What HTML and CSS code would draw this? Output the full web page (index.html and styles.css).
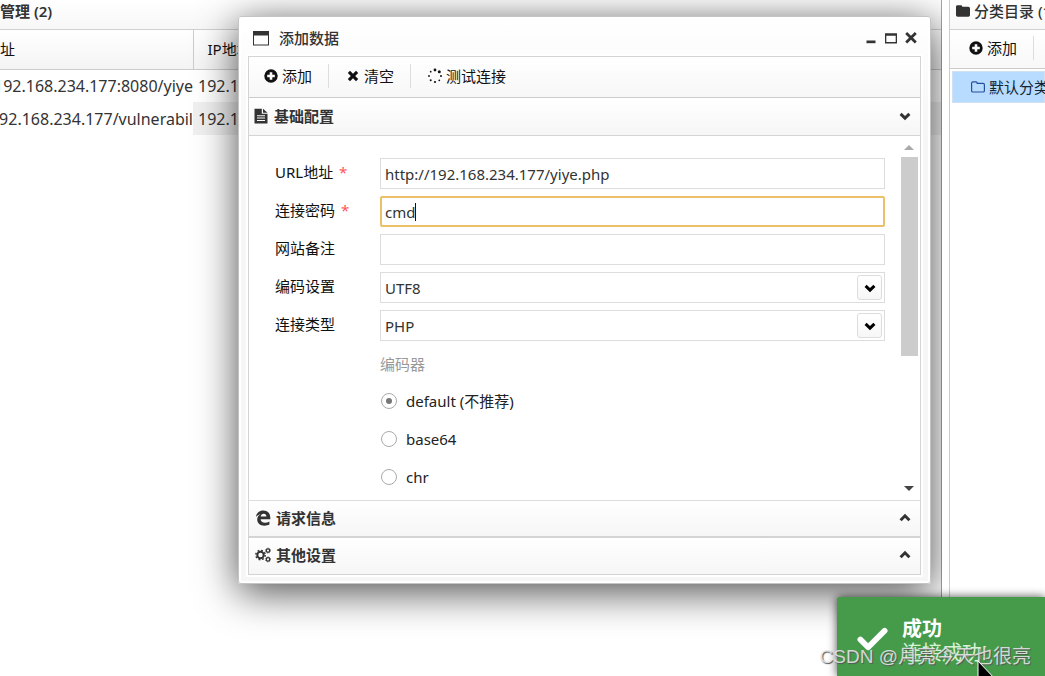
FILE: index.html
```html
<!DOCTYPE html>
<html lang="zh-CN">
<head>
<meta charset="utf-8">
<title>添加数据</title>
<link rel="stylesheet" href="styles.css">
</head>
<body>
<svg class="defs" aria-hidden="true">
  <symbol id="plus" viewBox="0 0 16 16"><path fill-rule="evenodd" d="M8 1.3a6.7 6.7 0 1 0 0 13.4A6.7 6.7 0 0 0 8 1.3ZM6.7 4.2h2.6v2.5h2.5v2.6H9.3v2.5H6.7V9.3H4.2V6.7h2.5Z"/></symbol>
  <symbol id="cross" viewBox="0 0 16 16"><path d="m5 2.800 3 3 3-3L13.200 5l-3 3 3 3L11 13.200l-3-3-3 3L2.800 11l3-3-3-3Z"/></symbol>
  <symbol id="down" viewBox="0 0 16 16"><path d="m3.6 5.9 4.4 4.2 4.4-4.2" fill="none" stroke="currentColor" stroke-width="3"/></symbol>
  <symbol id="up" viewBox="0 0 16 16"><path d="m3.6 10.2 4.4-4.4 4.4 4.4" fill="none" stroke="currentColor" stroke-width="3"/></symbol>
</svg>
<div class="app">
  <main class="sites">
    <h1 class="panel-head">管理 (2)</h1>
    <table class="grid">
      <thead><tr><th class="url">址</th><th>IP地址</th></tr></thead>
      <tbody>
        <tr><td class="url"><div class="tail">http://192.168.234.177:8080/yiye</div></td><td>192.168.234.177</td></tr>
        <tr><td class="url"><div class="tail">http://192.168.234.177/vulnerabil</div></td><td class="hover">192.168.234.177</td></tr>
      </tbody>
    </table>
  </main>

  <aside class="folders">
    <h2 class="panel-head"><svg class="ico" viewBox="0 0 16 16"><path d="M1 3.8C1 2.8 1.6 2.2 2.6 2.2h3.2c1 0 1.5.6 1.5 1.6h6c1 0 1.7.7 1.7 1.7v6.6c0 1-.7 1.7-1.7 1.7H2.7c-1 0-1.7-.7-1.7-1.7Z"/></svg>分类目录 (1)</h2>
    <div class="folder-bar"><button class="tool"><svg class="ico"><use href="#plus"/></svg>添加</button><i class="sep"></i></div>
    <a class="folder" href="#"><svg class="ico" viewBox="0 0 16 16"><path d="M1.6 4.2c0-.8.5-1.3 1.3-1.3H6c.8 0 1.2.5 1.2 1.5h5.9c.8 0 1.3.5 1.3 1.3v6c0 .8-.5 1.3-1.3 1.3H2.900c-.8 0-1.3-.5-1.3-1.3Z" fill="none" stroke="currentColor" stroke-width="1.2"/></svg>默认分类</a>
  </aside>

  <section class="window" role="dialog" aria-labelledby="win-title">
    <header class="win-head">
      <svg class="win-ico" viewBox="0 0 16 16"><path fill-rule="evenodd" d="M0 1h16v14.5H0Zm1 4.4v9h14v-9Z"/></svg>
      <h2 id="win-title">添加数据</h2>
      <button class="ctl" aria-label="最小化"><svg viewBox="0 0 14 14"><path d="M2.500 9.500h9v2.700h-9Z"/></svg></button>
      <button class="ctl" aria-label="最大化"><svg viewBox="0 0 14 14"><path fill-rule="evenodd" d="M1 2.200h12v10.200H1Zm1.300 2.600v6.300h9.400V4.800Z"/></svg></button>
      <button class="ctl" aria-label="关闭"><svg viewBox="0 0 14 14"><path d="m2.200 2 9.600 9.600M11.800 2l-9.600 9.600" stroke="currentColor" stroke-width="2.800"/></svg></button>
    </header>
    <div class="win-body">
      <div class="toolbar">
        <button class="tool"><svg class="ico"><use href="#plus"/></svg>添加</button><i class="sep"></i>
        <button class="tool"><svg class="ico"><use href="#cross"/></svg>清空</button><i class="sep"></i>
        <button class="tool"><svg class="ico" viewBox="0 0 16 16"><circle cx="8" cy="2" r="1.400"/><circle cx="12.300" cy="3.700" r="1.500"/><circle cx="14" cy="8" r="1"/><circle cx="12.300" cy="12.300" r=".9"/><circle cx="8" cy="14" r="1.100"/><circle cx="3.700" cy="12.300" r="1"/><circle cx="2" cy="8" r=".9"/><circle cx="3.700" cy="3.700" r=".9"/></svg>测试连接</button>
      </div>
      <button class="acc first"><svg class="ico" viewBox="0 0 16 16"><path fill-rule="evenodd" d="M1.500.8h7.300v5h5.700v9.700h-13ZM10 .8l4.500 3.900H10ZM4 7.200v1h8v-1Zm0 2.400v1h8v-1ZM4 12v1h8v-1Z"/></svg><span>基础配置</span><svg class="ico"><use href="#down"/></svg></button>
      <div class="pane">
        <form class="form">
          <div class="row"><label for="url">URL地址 <b class="req">*</b></label><input class="box" id="url" value="http://192.168.234.177/yiye.php"></div>
          <div class="row"><label for="pwd">连接密码 <b class="req">*</b></label><div class="focus"><input class="box active" id="pwd" value="cmd"><i class="caret"></i></div></div>
          <div class="row"><label for="note">网站备注</label><input class="box" id="note"></div>
          <div class="row"><label for="enc">编码设置</label><div class="combo"><select class="box" id="enc"><option>UTF8</option></select><span class="drop"><svg class="ico"><use href="#down"/></svg></span></div></div>
          <div class="row"><label for="type">连接类型</label><div class="combo"><select class="box" id="type"><option>PHP</option></select><span class="drop"><svg class="ico"><use href="#down"/></svg></span></div></div>
          <fieldset class="coders">
            <legend>编码器</legend>
            <label><input type="radio" name="coder" checked>default (不推荐)</label>
            <label><input type="radio" name="coder">base64</label>
            <label><input type="radio" name="coder">chr</label>
          </fieldset>
        </form>
        <div class="scroll"><i class="arrow-up"></i><i class="thumb"></i><i class="arrow-down"></i></div>
      </div>
      <button class="acc"><svg class="ico" viewBox="0 0 16 16"><path d="M.9 7.100C1.400 3 4.300.5 8.300.5c4.500 0 7 3 7 7.200v1.600H5.600c.1 2.300 1.900 3.400 4.300 3.400 1.700 0 3.200-.4 4.500-1.200v3.100c-1.300.7-3 1.100-5 1.100-4.300 0-7.200-2.300-7.200-6.100 0-2.600 1.400-4.800 3.700-5.700C3.800 4.300 2.100 5.500.9 7.100Zm4.800-.5h5.700c0-1.800-.9-2.900-2.700-2.900-1.700 0-2.700 1.200-3 2.900Z"/></svg><span>请求信息</span><svg class="ico"><use href="#up"/></svg></button>
      <button class="acc last"><svg class="ico" viewBox="0 0 16 16"><g fill="none" stroke="currentColor"><circle cx="5.500" cy="8" r="3.200" stroke-width="2"/><circle cx="5.500" cy="8" r="4.700" stroke-width="1.400" stroke-dasharray="1.850 1.850"/><circle cx="13" cy="3.600" r="1.700" stroke-width="1.300"/><circle cx="13" cy="12.400" r="1.700" stroke-width="1.300"/><circle cx="13" cy="3.600" r="2.500" stroke-width=".8" stroke-dasharray="1 1"/><circle cx="13" cy="12.400" r="2.500" stroke-width=".8" stroke-dasharray="1 1"/></g></svg><span>其他设置</span><svg class="ico"><use href="#up"/></svg></button>
    </div>
  </section>

  <div class="toast" role="status">
    <svg viewBox="0 0 32 26"><path d="m3.500 13.500 8 8L28.500 4.500" fill="none" stroke="#fff" stroke-width="6" stroke-linecap="round" stroke-linejoin="round"/></svg>
    <p><strong>成功</strong><br>连接成功!</p>
  </div>
  <div class="watermark">CSDN @月亮今天也很亮</div>
  <svg class="cursor" viewBox="0 0 20 30"><path d="M1 0v26l6-6 4 9 4-2-4-8h8Z" stroke="#fff"/></svg>
</div>
</body>
</html>
```
FILE: styles.css
```css
* { box-sizing: border-box; }
body {
  margin: 0;
  font: 15px/20px "Noto Sans", "Noto Sans CJK SC", sans-serif;
  color: #333;
}
h1, h2, p { margin: 0; }
button { font: inherit; color: inherit; border: 0; padding: 0; background: none; }
svg { fill: currentColor; flex: none; }
.defs { display: none; }
.ico { width: 16px; height: 16px; }

.app { position: relative; display: flex; gap: 7px; height: 100vh; overflow: hidden; background: #fff; }
.sites { flex: 1; min-width: 0; border-right: 1px solid #a8a8a8; overflow: hidden; }
.panel-head {
  display: flex; align-items: center; gap: 3px;
  height: 30px; padding: 0 0 8px; border-bottom: 1px solid #d0d0d0;
  background: linear-gradient(#fff, #f7f7f7);
  font-size: 15px; font-weight: 600; white-space: nowrap;
}
.grid { width: 100%; border-collapse: collapse; table-layout: fixed; font-size: 16px; }
.grid th {
  height: 39px; padding: 0 0 0 14px; text-align: left; font-weight: 400; font-size: 15px; color: #111;
  border-bottom: 1px solid #ccc; background: linear-gradient(#fff, #f4f4f4);
}
.grid .url { width: 193px; padding: 0; }
.grid th.url { border-right: 1px solid #ccc; }
.grid td { height: 33px; padding: 0 0 0 5px; }
.grid .hover { background: #f0f0f0; }
.tail { display: flex; justify-content: flex-end; overflow: hidden; white-space: nowrap; }

.folders {
  position: relative; z-index: 2; width: 96px; overflow: hidden;
  border-left: 1px solid #ccc; background: #fff; white-space: nowrap; box-shadow: -7px 0 #fff;
}
.folders .panel-head { padding-left: 5px; font-weight: 500; }
.folder-bar { display: flex; align-items: center; gap: 16px; height: 39px; padding: 0 0 3px 18px; border-bottom: 1px solid #ccc; background: linear-gradient(#fff, #f8f8f8); }
.folder {
  display: flex; align-items: center; gap: 3px; height: 32px; margin: 2px 0 0 2px; padding-left: 17px;
  border: 1px solid #cfe0f2; background: #b8dcff; color: #123; text-decoration: none;
}
.folder .ico { color: #25509a; }

.tool { display: flex; align-items: center; gap: 3px; height: 24px; color: #111; white-space: nowrap; }
.sep { width: 1px; height: 24px; background: #ddd; }

.window {
  position: absolute; z-index: 1; top: 16px; left: 238px; right: 114px;
  padding: 0 9px 8px; border: 1px solid #c4c4c4; border-radius: 3px;
  background: linear-gradient(#fff, #f6f6f6 120px);
  box-shadow: 0 8px 40px rgba(0, 0, 0, .7), inset 0 0 0 2px #fff;
}
.win-head { display: flex; align-items: center; gap: 6px; height: 39px; padding: 3px 3px 0 5px; }
.win-head h2 { flex: 1; padding-left: 4px; font-size: 15px; font-weight: 500; }
.win-ico { width: 16px; height: 16px; }
.ctl { width: 14px; height: 14px; }
.ctl svg { display: block; }
.win-body { border: 1px solid #d4d4d4; background: #fff; box-shadow: 0 0 0 2px #fff; }
.toolbar { display: flex; align-items: center; gap: 16px; height: 41px; padding: 0 0 3px 14px; border-bottom: 1px solid #ccc; background: linear-gradient(#fff, #f7f7f7); }
.acc {
  display: flex; align-items: center; gap: 5px; width: 100%; height: 37px; padding: 0 7px 2px 6px;
  border-bottom: 2px solid #d4d4d4; background: linear-gradient(#fff, #f6f6f6);
  font-weight: 600; text-align: left;
}
.acc span { flex: 1; }
.acc.first { height: 38px; padding-left: 4px; border-top: 1px solid #fff; border-bottom-width: 1px; }
.acc.last { border-bottom: 0; height: 36px; }
.pane { display: flex; height: 365px; overflow: hidden; border-bottom: 1px solid #ddd; }
.form { flex: 1; display: flex; flex-direction: column; gap: 7px; padding: 22px 15px 0 26px; }
.row { display: flex; flex: none; align-items: center; height: 31px; color: #111; }
.row label { width: 105px; padding-bottom: 3px; }
.req { margin-left: 2px; color: #f55; font-weight: 400; }
.box {
  display: block; flex: 1; width: 100%; min-width: 0; height: 31px; padding: 0 4px;
  border: 1px solid #ddd; border-radius: 0; background: #fff; color: #333;
  font: inherit; appearance: none; outline: 0;
}
.active { border: 2px solid #ecc069; border-radius: 2px; padding: 0 3px; }
.focus, .combo { position: relative; flex: 1; }
.caret { position: absolute; left: 35px; top: 7px; width: 1px; height: 18px; background: #111; }
.drop {
  position: absolute; right: 3px; top: 3px; display: grid; place-items: center; width: 25px; height: 25px;
  border: 1px solid #ddd; border-radius: 3px; background: linear-gradient(#fff, #f7f7f7); color: #000; pointer-events: none;
}
.coders { display: flex; flex-direction: column; margin: 0 0 0 105px; padding: 0; border: 0; }
.coders legend { height: 34px; padding: 6px 0 0; color: #999; }
.coders label { display: flex; align-items: center; gap: 9px; height: 38px; color: #222; }
.coders input {
  appearance: none; display: grid; place-items: center; width: 16px; height: 16px; margin: 0 0 0 1px;
  border: 1px solid #aaa; border-radius: 50%; background: #fff;
}
.coders input:checked::before { content: ""; width: 6px; height: 6px; border-radius: 50%; background: #777; }
.scroll { display: flex; flex-direction: column; align-items: center; width: 20px; padding: 9px 2px 9px 0; }
.thumb { width: 17px; height: 199px; margin-top: 7px; background: #ccc; }
.arrow-up, .arrow-down { border: 5px solid transparent; }
.arrow-up { border-top: 0; border-bottom-color: #aaa; }
.arrow-down { margin-top: auto; border-bottom: 0; border-top-color: #444; }

.toast {
  position: absolute; z-index: 3; top: 597px; left: 837px; right: 0; bottom: 0;
  display: flex; gap: 14px; padding: 20px 0 0 20px; border-radius: 3px 0 0;
  background: #469b4b; color: #fff; box-shadow: 0 0 10px rgba(0, 0, 0, .7);
  font-size: 20px; line-height: 24px; white-space: nowrap;
}
.toast svg { width: 31px; height: 26px; margin-top: 9px; }
.toast p { color: #d6f3d6; }
.toast strong { color: #fff; }
.watermark {
  position: absolute; z-index: 4; right: 14px; bottom: 7px;
  color: rgba(235, 235, 235, .85); font: 19px/24px "Liberation Sans", "Noto Sans CJK SC", sans-serif;
  text-shadow: 1px 1px 1px #555; white-space: nowrap;
}
.cursor { position: absolute; z-index: 5; left: 977px; top: 661px; width: 20px; height: 30px; fill: #000; }
```
